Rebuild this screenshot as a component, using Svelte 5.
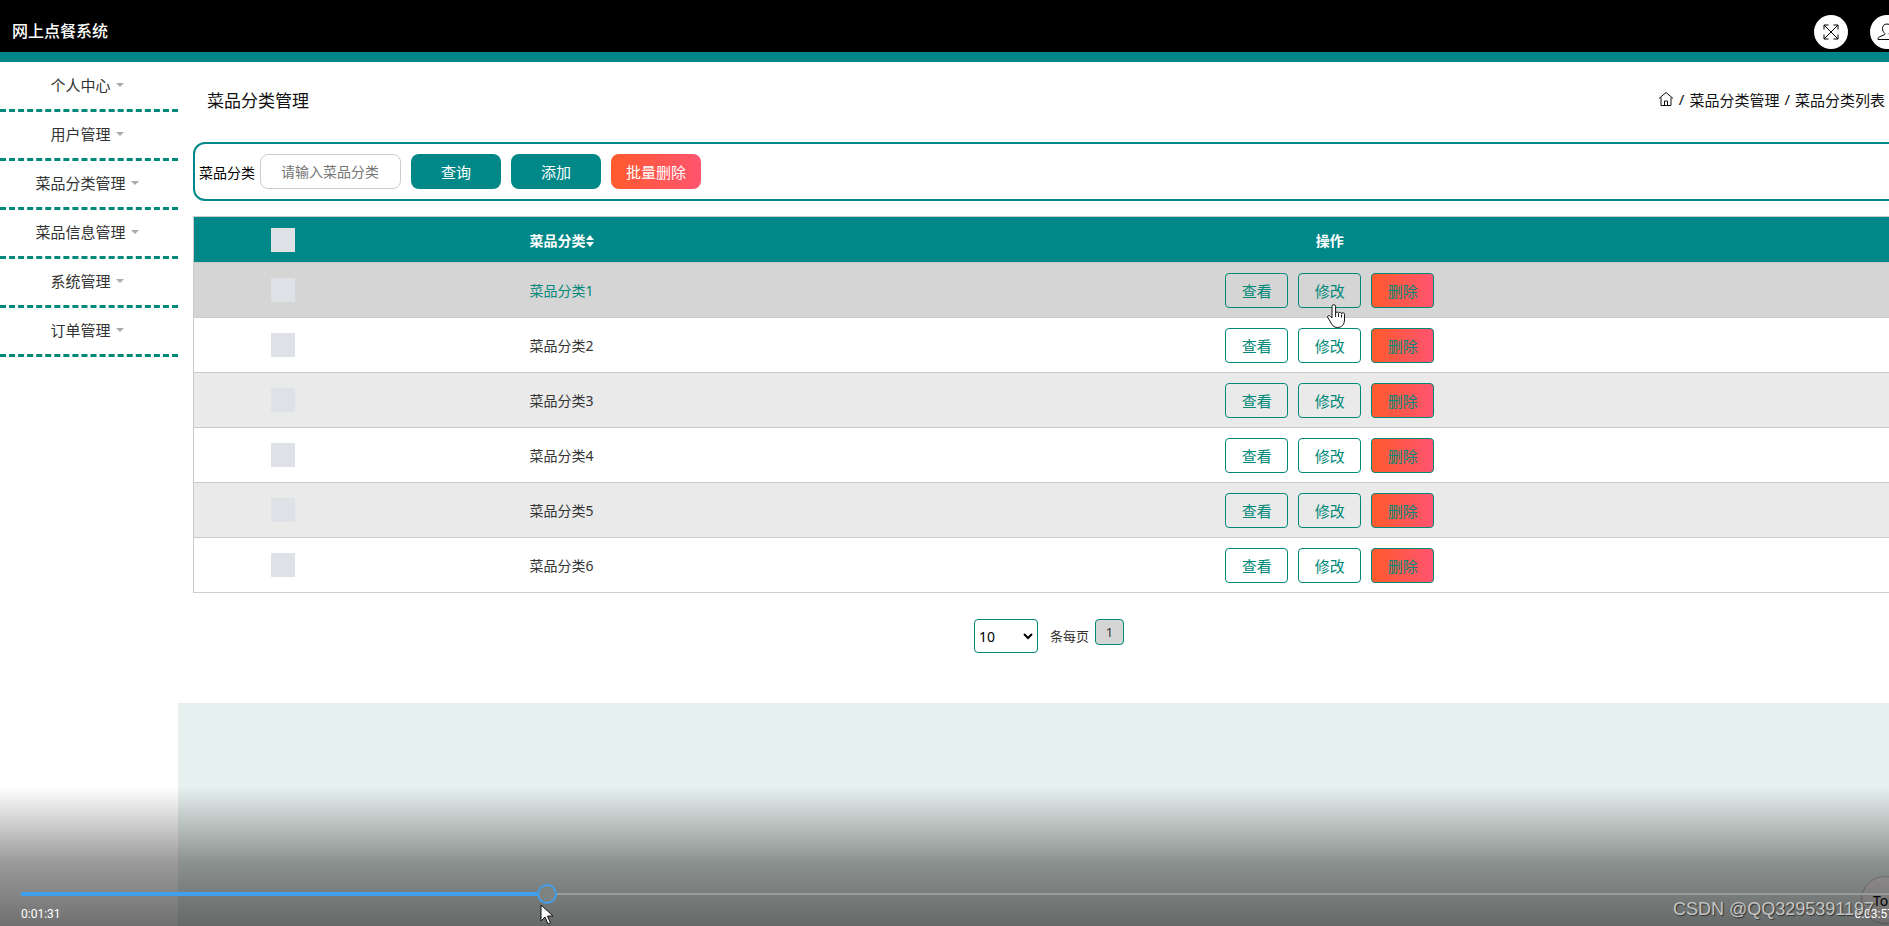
<script lang="ts">
  const menus = ['个人中心', '用户管理', '菜品分类管理', '菜品信息管理', '系统管理', '订单管理']

  const categories = [1, 2, 3, 4, 5, 6].map((id) => ({ id, name: `菜品分类${id}` }))

  let keyword = $state('')
  let pageSize = $state('10')
  let hovered = $state(1)

  const duration = 237
  let position = $state(66.2)
  let played = $derived((position / duration) * 100)
</script>

<div class="screen">
  <header>
    <h1>网上点餐系统</h1>
    <div class="tools">
      <button aria-label="全屏">
        <svg width="18" height="18" viewBox="0 0 18 18">
          <path d="M2 2l14 14M16 2L2 16M2 6.5V2h4.500M11.500 2H16v4.500M16 11.500V16h-4.500M6.500 16H2v-4.500" />
        </svg>
      </button>
      <button aria-label="用户">
        <svg width="20" height="18" viewBox="0 0 20 18">
          <path d="M10 1C7 1 5.500 3 5.500 5.500c0 2.200 1 3.800 2.200 4.800.4.600.2 1.200-.5 1.500L2.500 13.800C1.200 14.400 1 15.500 1 16.500h18c0-1-.2-2.100-1.500-2.700l-4.700-2c-.7-.3-.9-.9-.5-1.500 1.200-1 2.200-2.600 2.200-4.800C14.500 3 13 1 10 1z" />
        </svg>
      </button>
    </div>
  </header>

  <div class="body">
    <nav>
      <ul>
        {#each menus as menu}
          <li><a href="#menu">{menu}<span class="caret"></span></a></li>
        {/each}
      </ul>
    </nav>

    <main>
      <div class="panel">
        <div class="heading">
          <h2>菜品分类管理</h2>
          <div class="crumbs">
            <a href="#home" aria-label="首页">
              <svg width="16" height="16" viewBox="0 0 16 16">
                <path d="M1 7.500L8 1.500l7 6M3 6.500V14.500h10V6.500M6.500 14.500V10h3v4.500" />
              </svg>
            </a>
            <span>/</span>
            <span>菜品分类管理</span>
            <span>/</span>
            <span>菜品分类列表</span>
          </div>
        </div>

        <form class="search">
          <label for="keyword">菜品分类</label>
          <input id="keyword" type="text" placeholder="请输入菜品分类" bind:value={keyword} />
          <button type="button">查询</button>
          <button type="button">添加</button>
          <button type="button" class="danger">批量删除</button>
        </form>

        <table>
          <colgroup>
            <col class="col-check" />
            <col class="col-name" />
            <col />
          </colgroup>
          <thead>
            <tr>
              <th><input type="checkbox" aria-label="全选" /></th>
              <th>
                菜品分类<svg class="sort" width="8" height="12" viewBox="0 0 8 12"><path d="M4 0l4 5H0zM4 12l4-5H0z" /></svg>
              </th>
              <th>操作</th>
            </tr>
          </thead>
          <tbody>
            {#each categories as row}
              <tr class:hovered={row.id === hovered} onmouseenter={() => (hovered = row.id)}>
                <td><input type="checkbox" aria-label={row.name} /></td>
                <td>{row.name}</td>
                <td>
                  <div class="actions">
                    <button>查看</button>
                    <button>修改</button>
                    <button class="danger">删除</button>
                  </div>
                </td>
              </tr>
            {/each}
          </tbody>
        </table>

        <div class="pager">
          <div class="size">
            <select id="size" bind:value={pageSize}>
              <option>10</option>
              <option>25</option>
              <option>50</option>
            </select>
            <svg width="10" height="7" viewBox="0 0 10 7"><path d="M1 1l4 4 4-4" /></svg>
          </div>
          <label for="size">条每页</label>
          <button>1</button>
        </div>
      </div>
    </main>
  </div>

  <button class="top">Top</button>

  <div class="player">
    <input type="range" min="0" max={duration} step="any" aria-label="播放进度" bind:value={position} style="--played: {played}%" />
    <div class="times">
      <span>0:01:31</span>
      <span>0:03:57</span>
    </div>
  </div>

  <div class="watermark">CSDN @QQ3295391197</div>

  <svg class="hand" width="20" height="26" viewBox="0 0 20 26">
    <path d="M6 15V3.500a1.800 1.800 0 0 1 3.600 0V10a1.600 1.600 0 0 1 3 .2 1.600 1.600 0 0 1 3 .7 1.500 1.500 0 0 1 2.900.8V17c0 4-2.500 7.500-7 7.500-4 0-5.500-2.500-7-5.500l-3-5c0-1.500 2-2 3-.5z" />
    <path d="M9.600 10v4M12.600 10.500V14M15.600 11.500V14.500" />
  </svg>
  <svg class="arrow" width="14" height="22" viewBox="0 0 14 22">
    <path d="M1 1v16l4-4 3 7 2.500-1-3-7H13z" />
  </svg>
</div>

<style>
  :global(body) {
    margin: 0;
    overflow: hidden;
  }

  .screen {
    position: relative;
    display: flex;
    flex-direction: column;
    min-height: 100vh;
    overflow: hidden;
    background: #fff;
    color: #333;
    font-family: "Noto Sans", "Noto Sans CJK SC", sans-serif;
    font-size: 14px;
  }

  button,
  input,
  select {
    font-family: inherit;
    box-sizing: border-box;
    margin: 0;
  }

  a {
    color: inherit;
    text-decoration: none;
  }

  h1,
  h2 {
    margin: 0;
    font-weight: 400;
  }

  svg path {
    fill: none;
    stroke: currentColor;
  }

  header {
    display: flex;
    align-items: center;
    justify-content: space-between;
    height: 44px;
    margin-right: -20px;
    padding: 8px 5px 0 12px;
    background: #000;
    border-bottom: 10px solid #008888;
    color: #fff;
  }

  h1 {
    font-size: 16px;
    font-weight: 500;
  }

  .tools {
    display: flex;
    gap: 22px;
    padding-top: 4px;
  }

  .tools button {
    display: flex;
    align-items: center;
    justify-content: center;
    width: 34px;
    height: 34px;
    padding: 0;
    border: none;
    border-radius: 50%;
    background: #fff;
    color: #000;
  }

  .body {
    display: flex;
    flex: 1;
  }

  nav {
    flex: none;
    width: 178px;
    padding-top: 1px;
  }

  ul {
    margin: 0;
    padding: 0;
    list-style: none;
  }

  li {
    border-bottom: 3px dashed #008878;
  }

  li a {
    display: flex;
    align-items: center;
    justify-content: center;
    gap: 5px;
    height: 43px;
    padding: 0 4px 3px 0;
    font-size: 15px;
  }

  .caret {
    border: 4px solid transparent;
    border-top-color: #aaa;
    border-bottom: none;
  }

  main {
    flex: 1;
    margin-right: -20px;
    background: #e6f0ee;
  }

  .panel {
    padding: 0 0 50px 15px;
    background: #fff;
  }

  .heading {
    display: flex;
    align-items: center;
    justify-content: space-between;
    height: 74px;
    padding: 0 24px 6px 14px;
    color: #111;
  }

  h2 {
    font-size: 17px;
  }

  .crumbs {
    display: flex;
    align-items: center;
    gap: 5px;
    font-size: 15px;
  }

  .crumbs a {
    display: flex;
  }

  .search {
    display: flex;
    align-items: center;
    height: 55px;
    padding-left: 4px;
    border: 2px solid #008888;
    border-radius: 12px;
    color: #000;
  }

  .search input {
    width: 141px;
    height: 35px;
    margin-left: 5px;
    padding: 0 20px;
    border: 1px solid #ccc;
    border-radius: 8px;
    font-size: 14px;
  }

  .search input::placeholder {
    color: #757575;
  }

  .search button {
    width: 90px;
    height: 35px;
    margin-left: 10px;
    padding: 0;
    border: none;
    border-radius: 8px;
    background: #008888;
    color: #fff;
    font-size: 15px;
  }

  .danger,
  .search .danger {
    background: linear-gradient(90deg, #ff5a2c, #ff5470);
  }

  table {
    width: 100%;
    margin-top: 15px;
    border: 1px solid #ccc;
    border-collapse: collapse;
    table-layout: fixed;
  }

  .col-check {
    width: 178px;
  }

  .col-name {
    width: 380px;
  }

  th,
  td {
    padding: 0;
    text-align: center;
  }

  th {
    height: 45px;
    background: #008888;
    color: #fff;
  }

  td {
    height: 54px;
    border-top: 1px solid #ccc;
  }

  tbody tr:nth-child(odd) {
    background: #eaeaea;
  }

  tbody tr.hovered {
    background: #d5d5d5;
    color: #008878;
  }

  .sort {
    vertical-align: -1px;
  }

  .sort path {
    fill: #fff;
    stroke: none;
  }

  input[type="checkbox"] {
    appearance: none;
    display: block;
    width: 24px;
    height: 24px;
    margin: 0 auto;
    background: #dee1e5;
  }

  .actions {
    display: flex;
    justify-content: center;
    gap: 10px;
  }

  .actions button {
    width: 63px;
    height: 35px;
    padding: 0;
    border: 1px solid #008878;
    border-radius: 4px;
    background-color: transparent;
    color: #008878;
    font-size: 15px;
  }

  .pager {
    display: flex;
    align-items: flex-start;
    justify-content: center;
    margin-top: 26px;
    padding-right: 4px;
    font-size: 13px;
  }

  .size {
    display: grid;
    align-items: center;
    color: #000;
  }

  .size select,
  .size svg {
    grid-area: 1 / 1;
  }

  .size svg {
    justify-self: end;
    margin-right: 5px;
    pointer-events: none;
  }

  .size path {
    stroke-width: 2;
  }

  select {
    appearance: none;
    width: 64px;
    height: 34px;
    padding: 0 4px;
    border: 1px solid #008878;
    border-radius: 4px;
    background: #fff;
    font-size: 14px;
  }

  .pager label {
    margin: 0 6px 0 12px;
    line-height: 34px;
  }

  .pager button {
    width: 29px;
    height: 26px;
    padding: 0;
    border: 1px solid #008878;
    border-radius: 4px;
    background: #d5d5d5;
    color: #333;
    font-size: 13px;
  }

  .top {
    position: absolute;
    right: -20px;
    bottom: 2px;
    width: 48px;
    height: 48px;
    padding: 0;
    border: 1px solid #bbb;
    border-radius: 50%;
    background: #f4f0f0;
    color: #000;
    font-size: 14px;
  }

  .player {
    position: absolute;
    right: 0;
    bottom: 0;
    left: 0;
    padding: 97px 0 2px 21px;
    background: linear-gradient(rgba(0, 0, 0, 0), rgba(0, 0, 0, 0.4) 55%, rgba(0, 0, 0, 0.56));
    color: #fff;
    font-family: Roboto, sans-serif;
    font-size: 12px;
  }

  input[type="range"] {
    appearance: none;
    display: block;
    width: 100%;
    height: 20px;
    background:
      linear-gradient(#409eea, #409eea) left / var(--played) 4px no-repeat,
      linear-gradient(#979b9b, #979b9b) left / 100% 2px no-repeat;
  }

  input[type="range"]::-webkit-slider-thumb {
    appearance: none;
    box-sizing: border-box;
    width: 20px;
    height: 20px;
    border: 2px solid #409eea;
    border-radius: 50%;
    background: #7c8482;
  }

  .times {
    display: flex;
    justify-content: space-between;
    margin-right: -5px;
    line-height: 20px;
  }

  .watermark {
    position: absolute;
    right: 15px;
    bottom: 6px;
    color: #c4c4c4;
    font: 18px/22px "Liberation Sans", Arial, sans-serif;
    text-shadow: 1px 1px 1px #333;
  }

  .hand,
  .arrow {
    position: absolute;
    pointer-events: none;
  }

  .hand {
    top: 303px;
    left: 1326px;
  }

  .arrow {
    bottom: 0;
    left: 540px;
  }

  .hand path {
    stroke: #111;
  }

  .hand path:first-child,
  .arrow path {
    fill: #fff;
    stroke: #111;
  }
</style>
